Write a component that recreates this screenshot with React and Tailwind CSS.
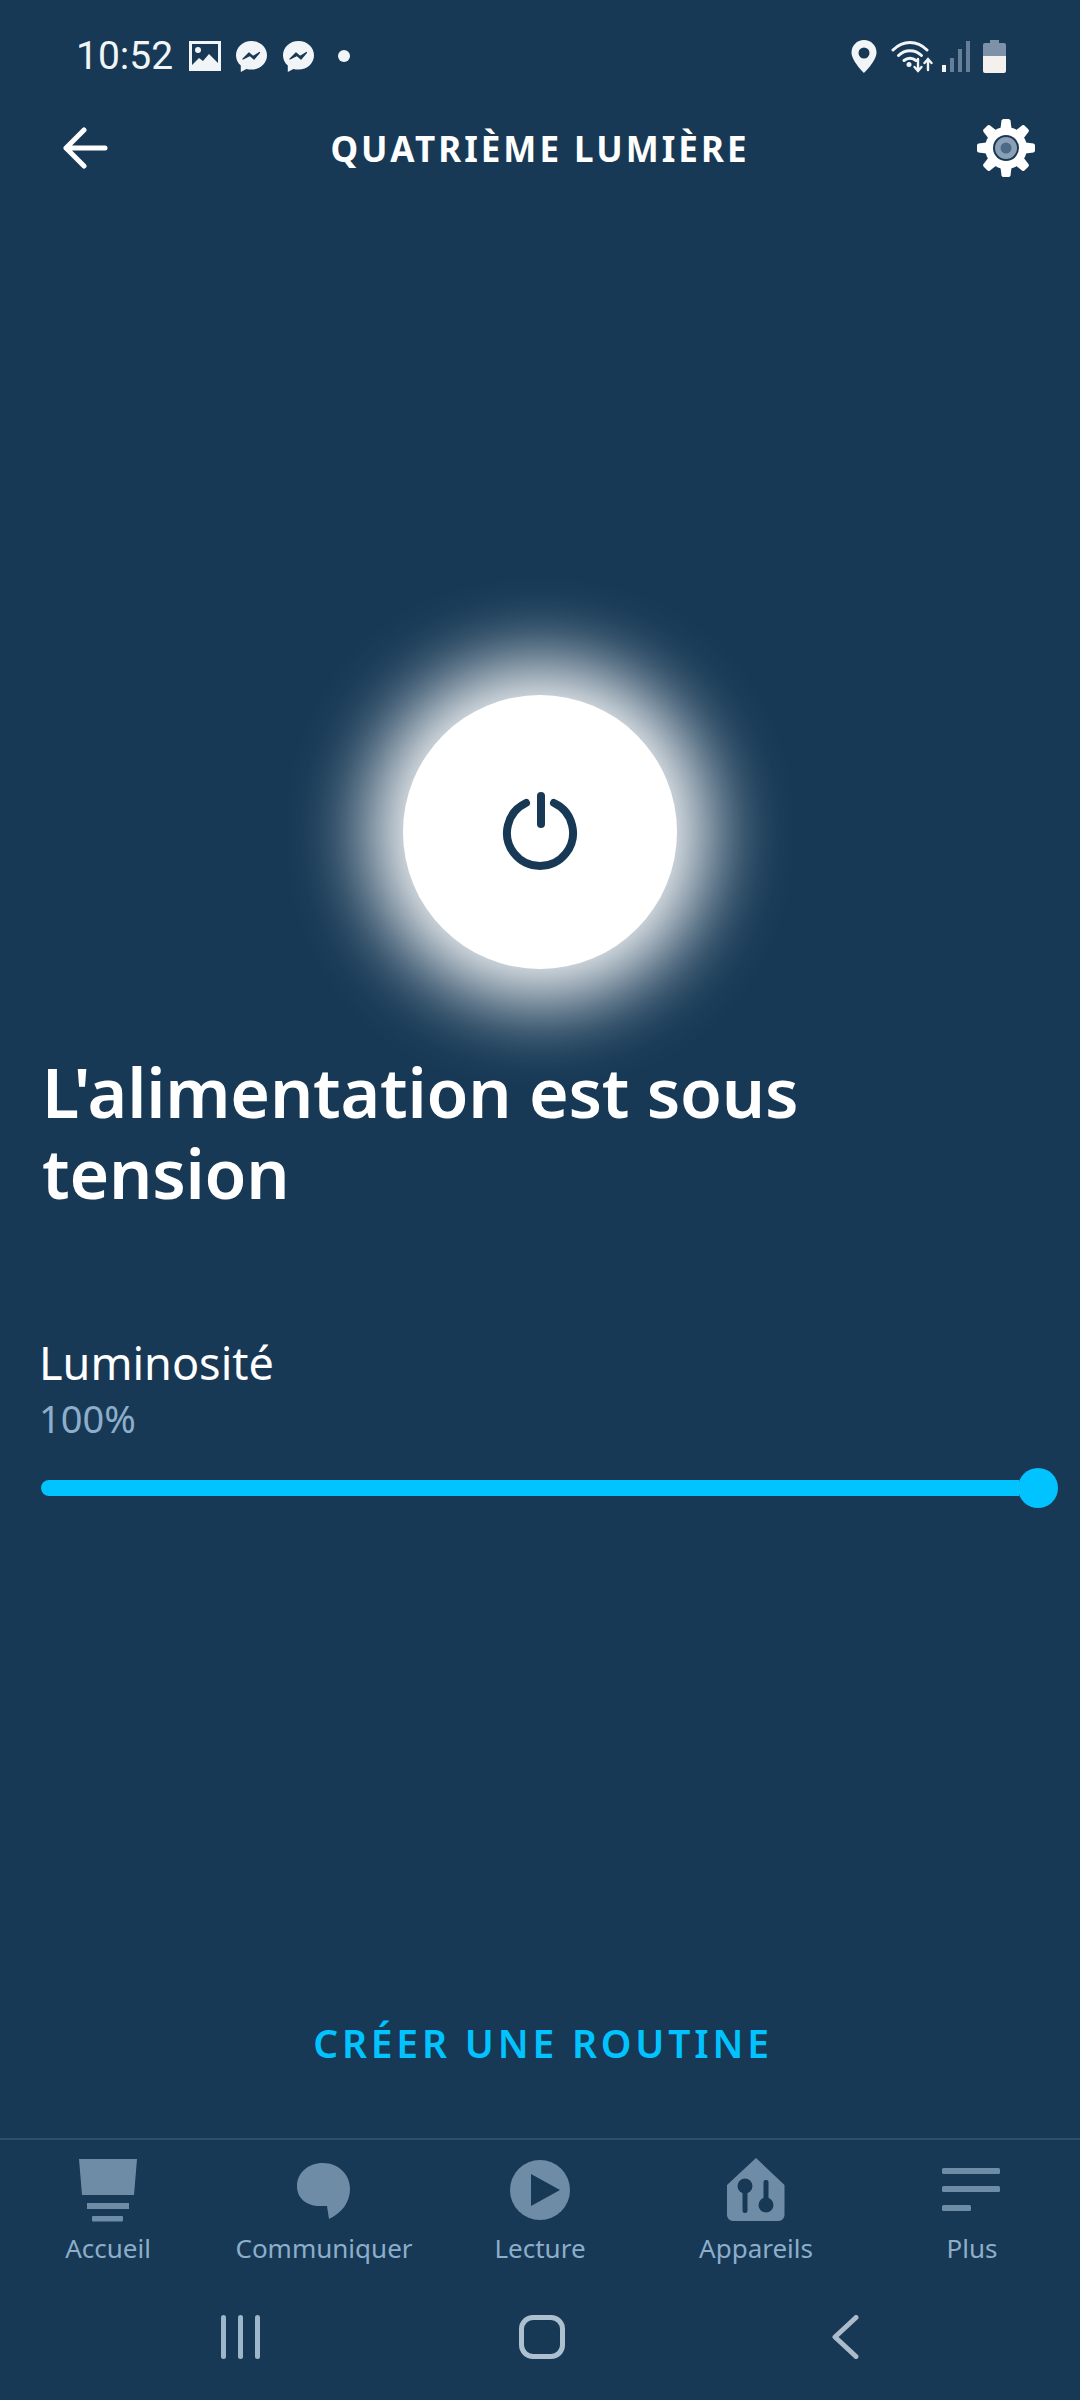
import React from 'react'

const NAV_COLOR = '#6f8ca7'
const BG = '#173955'

function Messenger() {
  return (
    <svg width="33" height="33" viewBox="0 0 33 33">
      <path d="M16.5 1C7.7 1 1 7.3 1 15.3c0 4.2 1.8 7.8 4.8 10.300V32l5.600-3.100c1.600.5 3.300.7 5.100.7 8.800 0 15.500-6.300 15.500-14.300S25.300 1 16.500 1z" fill="#f2f5f8" />
      <path d="M8 19l6-6 4 3.500 6.500-4-5.500 6.500-4-3.500z" fill={BG} stroke={BG} strokeWidth="1.200" strokeLinejoin="round" />
    </svg>
  )
}

function StatusBar() {
  return (
    <div className="h-[112px] flex items-center justify-between pl-[76px] pr-[74px]">
      <div className="flex items-center">
        <span className="font-['Roboto',sans-serif] text-[39px] leading-none text-[#f2f5f8] w-[113px]">10:52</span>
        <svg width="32" height="30" viewBox="0 0 32 30">
          <rect x="1.500" y="1.500" width="29" height="27" fill={BG} stroke="#f2f5f8" strokeWidth="3" />
          <circle cx="9" cy="9" r="3" fill="#f2f5f8" />
          <path d="M3 24l7-7 4 3 6-7 9 9v6H3z" fill="#f2f5f8" />
        </svg>
        <div className="ml-[14px]"><Messenger /></div>
        <div className="ml-[14px]"><Messenger /></div>
        <div className="ml-[23px] w-[12px] h-[12px] rounded-full bg-[#f2f5f8]" />
      </div>
      <div className="flex items-center">
        <svg width="26" height="33" viewBox="0 0 26 33">
          <path fillRule="evenodd" d="M13 0C6 0 .5 5.500.5 12.500.5 21 13 33 13 33s12.500-12 12.500-20.500C25.500 5.500 20 0 13 0zm0 7.500a5.500 5.500 0 1 1 0 11 5.500 5.500 0 0 1 0-11z" fill="#f2f5f8" />
        </svg>
        <svg className="ml-[14px]" width="42" height="33" viewBox="0 0 42 33" fill="none" stroke="#f2f5f8" strokeLinecap="round">
          <path d="M2 10C12 0 26 0 36 10" strokeWidth="3" />
          <path d="M7.500 15.500C14 9 24 9 30.500 15.500" strokeWidth="3" />
          <path d="M13 20.500c3.500-3 8.500-3 12 0" strokeWidth="3" />
          <circle cx="18" cy="24.500" r="2.500" fill="#f2f5f8" stroke="none" />
          <path d="M27 19v11M23.500 27l3.500 4 3.500-4" strokeWidth="2.400" />
          <path d="M37 30V20M33.500 23l3.500-4 3.500 4" strokeWidth="2.400" />
        </svg>
        <svg className="ml-[8px]" width="31" height="32" viewBox="0 0 31 32">
          <rect x="1" y="25" width="4" height="7" fill="#f2f5f8" />
          <rect x="9" y="18" width="4" height="14" fill="#667f98" />
          <rect x="17" y="9" width="4" height="23" fill="#667f98" />
          <rect x="25" y="1" width="4" height="31" fill="#667f98" />
        </svg>
        <svg className="ml-[11px]" width="23" height="33" viewBox="0 0 23 33">
          <path d="M7 0h9v3h5a2 2 0 0 1 2 2v16H0V5a2 2 0 0 1 2-2h5z" fill="#7d92a9" />
          <path d="M0 16h23v15a2 2 0 0 1-2 2H2a2 2 0 0 1-2-2z" fill="#f3f0ee" />
        </svg>
      </div>
    </div>
  )
}

function Gear() {
  const angles = [0, 45, 90, 135, 180, 225, 270, 315]
  return (
    <svg width="60" height="60" viewBox="0 0 60 60">
      {angles.map((a) => (
        <path key={a} d="M24 14L25.500 2.500Q26 1 27.500 1H32.500Q34 1 34.500 2.500L36 14Z" fill="#fff" transform={`rotate(${a} 30 30)`} />
      ))}
      <circle cx="30" cy="30" r="21" fill="#fff" />
      <circle cx="30" cy="30" r="13" fill={BG} />
      <circle cx="30" cy="30" r="11" fill="#8ba0b4" />
      <circle cx="30" cy="30" r="5.500" fill="#4a6a87" />
    </svg>
  )
}

function Header() {
  return (
    <div className="h-[72px] grid grid-cols-[1fr_auto_1fr] items-center px-[44px]">
      <svg className="ml-[18px]" width="46" height="42" viewBox="0 0 46 42" fill="none" stroke="#fff" strokeWidth="5" strokeLinecap="round" strokeLinejoin="round">
        <path d="M43 21H4M22 3L4 21l18 18" />
      </svg>
      <div className="text-[35px] font-bold tracking-[3px] text-white leading-none">QUATRIÈME LUMIÈRE</div>
      <div className="justify-self-end"><Gear /></div>
    </div>
  )
}

function PowerButton() {
  return (
    <div className="mt-[511px] mx-auto w-[274px] h-[274px] rounded-full bg-white shadow-[0_0_80px_32px_#ffffff] flex items-center justify-center">
      <svg width="80" height="80" viewBox="0 0 80 80" fill="none" stroke={BG} strokeWidth="8" strokeLinecap="round">
        <path d="M26 11A33 33 0 1 0 54 11" />
        <path d="M41 4V32" />
      </svg>
    </div>
  )
}

function HomeIcon() {
  return (
    <svg width="64" height="64" viewBox="0 0 64 64" fill={NAV_COLOR}>
      <path d="M3 1H61L58 37H6z" />
      <rect x="11" y="45" width="42" height="6" />
      <rect x="16" y="58" width="31" height="5.500" rx="1" />
    </svg>
  )
}

function ChatIcon() {
  return (
    <svg width="64" height="64" viewBox="0 0 64 64" fill={NAV_COLOR}>
      <path d="M31 5C46 5 58 16 58 31C58 44 50 55 37 61L35 48H28C14 48 5 40 5 28C5 15 16 5 31 5Z" />
    </svg>
  )
}

function PlayIcon() {
  return (
    <svg width="64" height="64" viewBox="0 0 64 64">
      <circle cx="32" cy="32" r="30" fill={NAV_COLOR} />
      <path d="M23 16L52 32L23 48Z" fill={BG} />
    </svg>
  )
}

function DevicesIcon() {
  return (
    <svg width="64" height="64" viewBox="0 0 64 64">
      <path d="M32 0L60.500 27V57a6 6 0 0 1-6 6H9a6 6 0 0 1-6-6V27z" fill={NAV_COLOR} strokeLinejoin="round" />
      <circle cx="21" cy="28" r="7.500" fill={BG} />
      <rect x="18.500" y="28" width="5" height="27" rx="2.500" fill={BG} />
      <circle cx="42" cy="47" r="7.500" fill={BG} />
      <rect x="39.500" y="22" width="5" height="26" rx="2" fill={BG} />
    </svg>
  )
}

function MoreIcon() {
  return (
    <svg width="64" height="64" viewBox="0 0 64 64" fill={NAV_COLOR}>
      <rect x="2" y="10" width="58" height="6" rx="1.500" />
      <rect x="2" y="28" width="58" height="6" rx="1.500" />
      <rect x="2" y="47" width="29" height="6" rx="1.500" />
    </svg>
  )
}

const tabs = [
  { label: 'Accueil', icon: <HomeIcon /> },
  { label: 'Communiquer', icon: <ChatIcon /> },
  { label: 'Lecture', icon: <PlayIcon /> },
  { label: 'Appareils', icon: <DevicesIcon /> },
  { label: 'Plus', icon: <MoreIcon /> },
]

function BottomNav() {
  return (
    <div className="border-t-2 border-[#2c4f6b] grid grid-cols-5 pt-[18px]">
      {tabs.map((t) => (
        <div key={t.label} className="flex flex-col items-center">
          {t.icon}
          <div className="mt-[10px] text-[26px] leading-[32px] text-[#8caecb]">{t.label}</div>
        </div>
      ))}
    </div>
  )
}

function SystemNav() {
  return (
    <div className="h-[136px] flex items-start pl-[221px] pt-[51px]">
      <div className="flex gap-[12px] h-[44px]">
        <div className="w-[5px] h-full rounded-full bg-[#9db6ca]" />
        <div className="w-[5px] h-full rounded-full bg-[#9db6ca]" />
        <div className="w-[5px] h-full rounded-full bg-[#9db6ca]" />
      </div>
      <div className="ml-[259px] w-[46px] h-[44px] rounded-[14px] border-[5px] border-[#adc0cf]" />
      <svg className="ml-[266px]" width="28" height="44" viewBox="0 0 28 44" fill="none" stroke="#adbccb" strokeWidth="5" strokeLinecap="round" strokeLinejoin="round">
        <path d="M25 2.500L4 22l21 19.500" />
      </svg>
    </div>
  )
}

export default function App() {
  return (
    <div className="w-[1080px] h-[2400px] bg-[#173955] flex flex-col font-['Noto_Sans',sans-serif] overflow-hidden">
      <StatusBar />
      <Header />
      <PowerButton />
      <h1 className="mt-[82px] pl-[42px] text-[68px] tracking-[-0.2px] leading-[81px] font-semibold text-white">
        L'alimentation est sous<br />tension
      </h1>
      <div className="mt-[124px] pl-[39px] text-[45px] leading-[52px] text-white">Luminosité</div>
      <div className="mt-[9px] pl-[39px] text-[38px] leading-[40px] text-[#8caecb]">100%</div>
      <div className="mt-[30px] pl-[41px] pr-[22px] flex items-center">
        <div className="flex-1 h-[16px] bg-[#00c3ff] rounded-l-full" />
        <div className="-ml-[1px] w-[40px] h-[40px] rounded-full bg-[#00c3ff]" />
      </div>
      <div className="flex-1" />
      <div className="mb-[65px] pl-[6px] text-center text-[39px] leading-[60px] font-semibold tracking-[3.8px] text-[#00c3ff]">CRÉER UNE ROUTINE</div>
      <BottomNav />
      <SystemNav />
    </div>
  )
}
